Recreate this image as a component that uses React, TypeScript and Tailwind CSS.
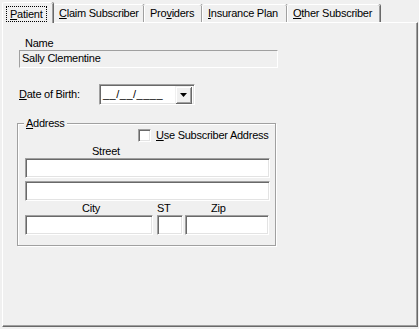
import React from "react";

const font = { fontFamily: '"Liberation Sans", Arial, sans-serif' };

function Tab({ children, w, selected }: { children: React.ReactNode; w: string; selected?: boolean }) {
  if (selected) {
    return (
      <div
        className={`relative z-10 ${w} h-[21px] -mb-[1px] bg-[#f0f0f0] border-l border-t border-white rounded-tl-[2px] rounded-tr-[2px] shadow-[inset_-1px_0_0_#a0a0a0,1px_0_0_#696969] flex items-start pt-[3px] pl-[3px]`}
      >
        <div className="border border-dotted border-black h-[16px] px-[3px] leading-[14px]">{children}</div>
      </div>
    );
  }
  return (
    <div
      className={`${w} h-[18px] bg-[#f0f0f0] border-l border-t border-white rounded-tl-[2px] rounded-tr-[2px] shadow-[inset_-1px_0_0_#a0a0a0,1px_0_0_#696969] flex items-start pt-[2px] pl-[5px] leading-[13px] whitespace-nowrap`}
    >
      {children}
    </div>
  );
}

function Sunken({ className }: { className: string }) {
  return (
    <div
      className={`${className} bg-white border border-t-[#a0a0a0] border-l-[#a0a0a0] border-r-white border-b-white shadow-[inset_1px_1px_0_#696969,inset_-1px_-1px_0_#e3e3e3]`}
    />
  );
}

export default function App() {
  return (
    <div className="w-[419px] h-[329px] bg-[#f0f0f0] text-[11px] tracking-[-0.25px] text-black overflow-hidden" style={font}>
      <div className="flex items-end h-[22px] pl-[2px]">
        <Tab w="w-[51px]" selected>
          <span className="underline">P</span>atient
        </Tab>
        <Tab w="w-[91px]">
          <span>
            <span className="underline">C</span>laim Subscriber
          </span>
        </Tab>
        <Tab w="w-[58px]">
          <span>
            Pro<span className="underline">v</span>iders
          </span>
        </Tab>
        <Tab w="w-[85px]">
          <span>
            <span className="underline">I</span>nsurance Plan
          </span>
        </Tab>
        <Tab w="w-[93px]">
          <span>
            <span className="underline">O</span>ther Subscriber
          </span>
        </Tab>
      </div>
      <div className="ml-[2px] w-[416px] h-[305px] border-l border-t border-white border-r border-b border-r-[#696969] border-b-[#696969] shadow-[inset_-1px_-1px_0_#a0a0a0] pl-[16px] pt-[14px] flex flex-col">
        <div className="h-[13px] leading-[13px] pl-[6px]">Name</div>
        <div className="w-[259px] h-[18px] border border-t-[#a0a0a0] border-l-[#a0a0a0] border-r-white border-b-white pl-[2px] leading-[15px]">
          Sally Clementine
        </div>
        <div className="flex items-center mt-[16px] h-[21px]">
          <div className="w-[80px]">
            <span className="underline">D</span>ate of Birth:
          </div>
          <div className="w-[96px] h-[21px] bg-white border border-t-[#a0a0a0] border-l-[#a0a0a0] border-r-white border-b-white shadow-[inset_1px_1px_0_#696969,inset_-1px_-1px_0_#e3e3e3] flex items-center pl-[3px] pr-[2px]">
            <span className="flex-1 leading-[13px] tracking-[0.5px]">__/__/____</span>
            <div className="w-[16px] h-[17px] bg-[#f0f0f0] border-l border-t border-[#f0f0f0] shadow-[inset_1px_1px_0_#fff,inset_-1px_-1px_0_#a0a0a0,1px_1px_0_#696969] flex items-center justify-center mr-[1px] mb-[1px]">
              <svg width="7" height="4" viewBox="0 0 7 4">
                <path d="M0 0h7L3.5 4z" fill="#000" />
              </svg>
            </div>
          </div>
        </div>
        <div className="relative mt-[18px] -ml-[2px] w-[259px] h-[123px] border border-[#a0a0a0] shadow-[1px_1px_0_#fff,inset_1px_1px_0_#fff] pl-[7px] pt-[5px] flex flex-col">
          <div className="absolute -top-[7px] left-[6px] px-[2px] bg-[#f0f0f0] leading-[13px]">
            <span className="underline">A</span>ddress
          </div>
          <div className="flex items-center h-[13px] ml-[113px] gap-[5px]">
            <div className="w-[13px] h-[13px] bg-white border border-t-[#a0a0a0] border-l-[#a0a0a0] border-r-white border-b-white shadow-[inset_1px_1px_0_#696969,inset_-1px_-1px_0_#e3e3e3]" />
            <span className="leading-[13px] whitespace-nowrap">
              <span className="underline">U</span>se Subscriber Address
            </span>
          </div>
          <div className="h-[13px] leading-[13px] mt-[3px] pl-[67px]">Street</div>
          <Sunken className="w-[245px] h-[20px]" />
          <Sunken className="w-[245px] h-[20px] mt-[3px]" />
          <div className="flex h-[14px] leading-[13px] pt-[1px]">
            <div className="w-[128px] pl-[57px]">City</div>
            <div className="w-[26px] ml-[4px]">ST</div>
            <div className="w-[84px] ml-[2px] pl-[26px]">Zip</div>
          </div>
          <div className="flex">
            <Sunken className="w-[128px] h-[20px]" />
            <Sunken className="w-[26px] h-[20px] ml-[4px]" />
            <Sunken className="w-[84px] h-[20px] ml-[2px]" />
          </div>
        </div>
      </div>
    </div>
  );
}
